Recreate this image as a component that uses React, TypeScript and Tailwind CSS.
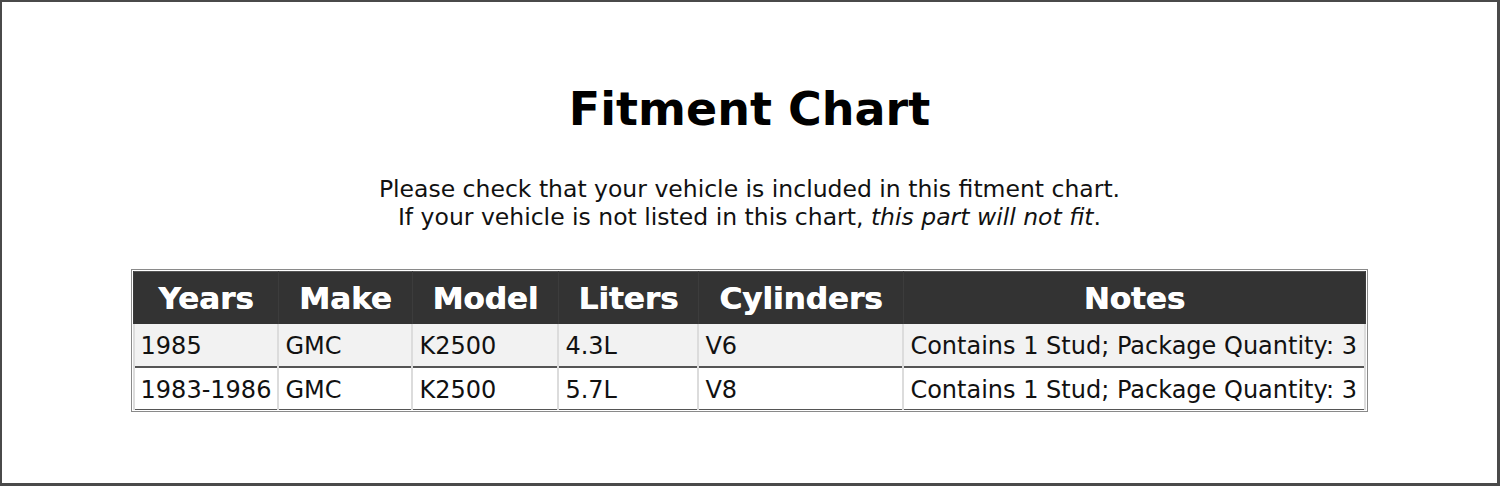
export default function App() {
  const columns = [
    { label: 'Years', width: 'w-[143px]' },
    { label: 'Make', width: 'w-[134px]' },
    { label: 'Model', width: 'w-[146px]' },
    { label: 'Liters', width: 'w-[140px]' },
    { label: 'Cylinders', width: 'w-[205px]' },
    { label: 'Notes', width: 'w-[462px]' },
  ];

  const rows = [
    ['1985', 'GMC', 'K2500', '4.3L', 'V6', 'Contains 1 Stud; Package Quantity: 3'],
    ['1983-1986', 'GMC', 'K2500', '5.7L', 'V8', 'Contains 1 Stud; Package Quantity: 3'],
  ];

  return (
    <main className="w-[1500px] h-[486px] bg-white border-t-2 border-l-2 border-r-[3px] border-b-[3px] border-[#4a4a4a] font-['DejaVu_Sans',Verdana,sans-serif] text-black flex flex-col items-center">
      <h1 className="mt-[81px] text-[46px] leading-[52px] font-bold">Fitment Chart</h1>
      <p className="mt-[40px] text-[23.5px] leading-[28px] text-center text-[#111]">
        Please check that your vehicle is included in this fitment chart.
        <br />
        If your vehicle is not listed in this chart, <em>this part will not fit</em>.
      </p>
      <div className="mt-[38px] border border-[#8a8a8a] p-px">
        <table className="border-collapse border border-[#555] table-fixed">
          <thead>
            <tr className="bg-[#333] text-white h-[52px]">
              {columns.map((c) => (
                <th key={c.label} className={`${c.width} text-[31px] font-bold text-center px-1 border-x border-[#3c3c3c] [text-shadow:0.6px_0_0_white]`}>
                  {c.label}
                </th>
              ))}
            </tr>
          </thead>
          <tbody>
            {rows.map((row, i) => (
              <tr key={i} className={`h-[43px] ${i === 0 ? 'bg-[#f2f2f2] border-b-2 border-[#555]' : 'bg-white'}`}>
                {row.map((cell, j) => (
                  <td key={j} className="text-[24px] px-[6px] pt-[3px] text-left whitespace-nowrap border-x-2 border-[#dcdcdc] text-[#111]">
                    {cell}
                  </td>
                ))}
              </tr>
            ))}
          </tbody>
        </table>
      </div>
    </main>
  );
}
